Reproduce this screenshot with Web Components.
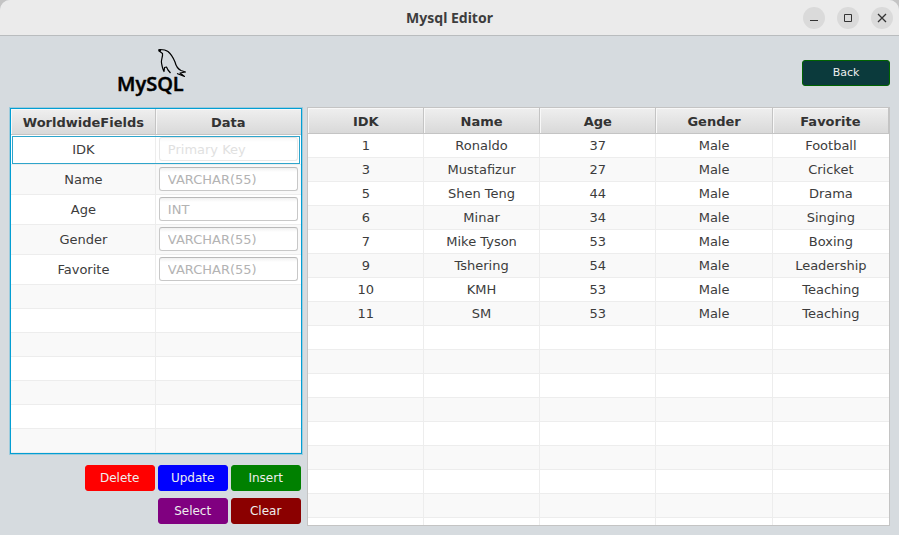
<!DOCTYPE html>
<html lang="en">
<head>
<meta charset="utf-8">
<title>Mysql Editor</title>
<style>
  html, body { margin: 0; height: 100%; }
  body { background: #c4c4c4; font: 13px/16px "DejaVu Sans", sans-serif; color: #3c3c3c; }
</style>
</head>
<body>
<editor-window></editor-window>

<template id="title-bar-tpl">
  <style>
    :host { display: grid; grid-template-columns: 1fr auto 1fr; align-items: center; height: 35px; background: #ebebeb; border-bottom: 1px solid #b9bcbe; }
    h1 { grid-column: 2; margin: 0; font: bold 14px/20px "Noto Sans", sans-serif; color: #3d3d3d; }
    .controls { display: flex; gap: 12px; justify-content: flex-end; padding-right: 6px; }
    button { width: 22px; height: 22px; padding: 0; border: 0; border-radius: 50%; background: #dadada; display: grid; place-items: center; color: #333; }
    svg { display: block; fill: none; stroke: currentColor; }
  </style>
  <h1><slot></slot></h1>
  <div class="controls">
    <button aria-label="Minimize"><svg width="10" height="10"><path d="M1 7.5h8"/></svg></button>
    <button aria-label="Maximize"><svg width="10" height="10"><path d="M1.5 1.5h7v7h-7z"/></svg></button>
    <button aria-label="Close"><svg width="10" height="10"><path d="M1 1l8 8M9 1l-8 8" stroke-width="1.3"/></svg></button>
  </div>
</template>

<template id="logo-tpl">
  <style>
    :host { display: block; }
    svg { display: block; }
    text { font: 600 20px "Open Sans", sans-serif; stroke: #000; stroke-width: .5px; }
  </style>
  <svg width="70" height="51" viewBox="0 0 70 51" role="img" aria-label="MySQL">
    <path d="M40.500 4.500L42 3.500C45 3.500 48 4 50 5.500C53 8 55 11 57 16C58 20 60 23 63 24.500L67.500 26L62 27L66.500 30.500L59 27.500M40.500 4.500L44.500 7.500C45 11 43 13 43.500 17C44 20 44.500 23 46 25.500L46.500 21.500L48.500 21L50 24L52.500 27" fill="none" stroke="#000" stroke-width="1.2" stroke-linejoin="round"/>
    <path d="M40 3.500h3v2h-2z"/>
    <text x="-1" y="45">MySQL</text>
  </svg>
</template>

<template id="action-button-tpl">
  <style>
    :host { display: block; }
    button { width: 100%; height: 26px; padding: 0; border: 1px solid var(--edge, var(--fill)); border-radius: 3px; background: var(--fill); color: #eee; font: var(--size, 12px)/16px "DejaVu Sans", sans-serif; }
  </style>
  <button type="button"><slot></slot></button>
</template>

<template id="grid-style-tpl">
  <style>
    :host { display: block; box-sizing: border-box; overflow: hidden; min-height: 0; background: #fff; border: 1px solid #c4c4c4; }
    table { width: 100%; table-layout: fixed; border-collapse: separate; border-spacing: 0; text-align: center; }
    th, td { box-sizing: border-box; padding: 0; }
    th { height: 26px; padding-top: 2px; border-right: 1px solid #c4c4c4; border-bottom: 1px solid #c4c4c4; background: linear-gradient(#efefef, #d9d9d9); box-shadow: inset 1px 1px #f8f8f8; color: #333; }
    td { height: var(--row, 24px); border-right: 1px solid #ededed; border-bottom: 1px solid #ededed; }
    th:first-child, td:first-child { padding-left: 1px; }
    td:last-child { border-right: 0; }
    tbody tr:nth-child(even) { background: #f9f9f9; }
    tr.blank { --row: 24px; }
  </style>
</template>

<template id="field-extra-tpl">
  <style>
    :host { --row: 30px; border-color: #039ed3; box-shadow: 0 0 0 1px #9dcbdc; }
    th:last-child { border-right: 0; }
    td:nth-child(2) { padding: 0 3px; }
    tr.current { outline: 1px solid #2fa5cb; outline-offset: -2px; }
    input { display: block; box-sizing: border-box; width: 100%; height: 24px; margin-bottom: 1px; padding: 0 8px; border: 1px solid #c8c8c8; border-top-color: #b9b9b9; border-radius: 3px; background: linear-gradient(#f0f0f0, #fff 4px); font: inherit; color: #333; }
    input::placeholder { color: #b3b3b3; opacity: 1; }
    input:disabled { opacity: .4; }
  </style>
</template>

<template id="window-tpl">
  <style>
    :host { display: grid; grid-template-rows: auto minmax(0, 1fr); height: 100vh; min-height: 360px; background: #d6dbdf; border-radius: 10px 10px 0 0; overflow: hidden; }
    main { display: grid; grid-template: 71px minmax(0, 1fr) / minmax(0, 1fr) minmax(0, 2fr); column-gap: 5px; padding: 0 9px 9px 10px; }
    .brand { display: grid; justify-content: center; align-content: center; padding-right: 6px; }
    .nav { display: grid; justify-content: end; align-content: center; grid-template-columns: 88px; padding-top: 2px; }
    .left { display: flex; flex-direction: column; min-height: 0; padding-top: 1px; gap: 11px; }
    .left field-table { flex: 1; }
    .actions { display: grid; grid-template-columns: repeat(3, 70px); gap: 7px 3px; justify-content: end; padding: 0 1px 2px 0; }
    .select { grid-column: 2; }
  </style>
  <title-bar>Mysql Editor</title-bar>
  <main>
    <div class="brand"><mysql-logo></mysql-logo></div>
    <div class="nav"><action-button style="--fill:#0b3a3c;--edge:#006400;--size:11px">Back</action-button></div>
    <div class="left">
      <field-table></field-table>
      <div class="actions">
        <action-button style="--fill:#ff0000">Delete</action-button>
        <action-button style="--fill:#0000ff">Update</action-button>
        <action-button style="--fill:#008000">Insert</action-button>
        <action-button class="select" style="--fill:#800080">Select</action-button>
        <action-button style="--fill:#8b0000">Clear</action-button>
      </div>
    </div>
    <record-table></record-table>
  </main>
</template>

<script>
  const copy = id => document.getElementById(id).content.cloneNode(true);
  const blanks = (n, cols) => `<tr class="blank" aria-hidden="true">${'<td></td>'.repeat(cols)}</tr>`.repeat(n);

  function fromTemplate(id) {
    return class extends HTMLElement {
      constructor() {
        super();
        this.attachShadow({ mode: 'open' }).append(copy(id));
      }
    };
  }

  class GridTable extends HTMLElement {
    constructor() {
      super();
      this.attachShadow({ mode: 'open' }).append(copy('grid-style-tpl'));
    }
    fill(heads, body) {
      const table = document.createElement('table');
      table.innerHTML = `<thead><tr>${heads.map(h => `<th scope="col">${h}</th>`).join('')}</tr></thead><tbody>${body}${blanks(40, heads.length)}</tbody>`;
      this.shadowRoot.append(table);
    }
  }

  customElements.define('field-table', class extends GridTable {
    constructor() {
      super();
      this.shadowRoot.append(copy('field-extra-tpl'));
      const fields = [['IDK', 'Primary Key'], ['Name', 'VARCHAR(55)'], ['Age', 'INT'], ['Gender', 'VARCHAR(55)'], ['Favorite', 'VARCHAR(55)']];
      this.fill(['WorldwideFields', 'Data'], fields.map(([name, hint], i) =>
        `<tr${i ? '' : ' class="current"'}><td><label for="${name}">${name}</label></td><td><input id="${name}" type="text" placeholder="${hint}"${i ? '' : ' disabled'}></td></tr>`).join(''));
    }
  });

  customElements.define('record-table', class extends GridTable {
    constructor() {
      super();
      const rows = [
        [1, 'Ronaldo', 37, 'Male', 'Football'],
        [3, 'Mustafizur', 27, 'Male', 'Cricket'],
        [5, 'Shen Teng', 44, 'Male', 'Drama'],
        [6, 'Minar', 34, 'Male', 'Singing'],
        [7, 'Mike Tyson', 53, 'Male', 'Boxing'],
        [9, 'Tshering', 54, 'Male', 'Leadership'],
        [10, 'KMH', 53, 'Male', 'Teaching'],
        [11, 'SM', 53, 'Male', 'Teaching']
      ];
      this.fill(['IDK', 'Name', 'Age', 'Gender', 'Favorite'],
        rows.map(r => `<tr>${r.map(c => `<td>${c}</td>`).join('')}</tr>`).join(''));
    }
  });

  customElements.define('title-bar', fromTemplate('title-bar-tpl'));
  customElements.define('mysql-logo', fromTemplate('logo-tpl'));
  customElements.define('action-button', fromTemplate('action-button-tpl'));
  customElements.define('editor-window', fromTemplate('window-tpl'));
</script>
</body>
</html>
